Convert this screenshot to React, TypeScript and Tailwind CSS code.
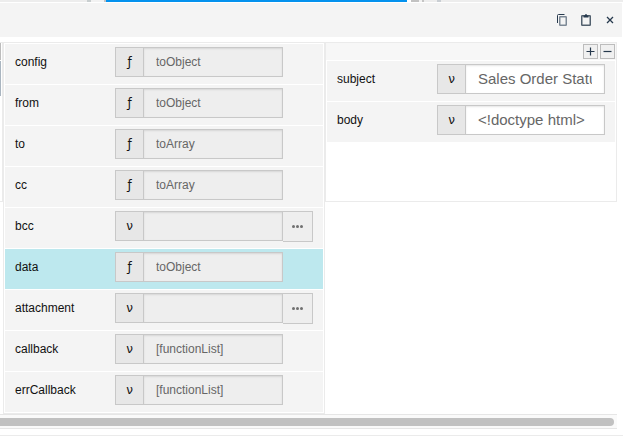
type FieldKind = "function" | "value";

interface Field {
  name: string;
  kind: FieldKind;
  value: string;
  hasMore?: boolean;
  selected?: boolean;
}

const properties: Field[] = [
  { name: "config", kind: "function", value: "toObject" },
  { name: "from", kind: "function", value: "toObject" },
  { name: "to", kind: "function", value: "toArray" },
  { name: "cc", kind: "function", value: "toArray" },
  { name: "bcc", kind: "value", value: "", hasMore: true },
  { name: "data", kind: "function", value: "toObject", selected: true },
  { name: "attachment", kind: "value", value: "", hasMore: true },
  { name: "callback", kind: "value", value: "[functionList]" },
  { name: "errCallback", kind: "value", value: "[functionList]" },
];

const details: Field[] = [
  { name: "subject", kind: "value", value: "Sales Order Status" },
  { name: "body", kind: "value", value: "<!doctype html>" },
];

function FieldRow({ field, editable = false }: { field: Field; editable?: boolean }) {
  return (
    <div className={`flex h-10 items-start pt-[3px] pl-[10px] ${field.selected ? "bg-[#bde8ee]" : "bg-[#f4f4f4]"}`}>
      <label htmlFor={field.name} className="w-[100px] shrink-0 text-[12px] leading-[30px] text-[#111]">
        {field.name}
      </label>
      <div className="flex h-[30px] w-[168px] shrink-0 border border-[#c8c8c8]">
        <button
          type="button"
          aria-label={`${field.name} type`}
          className="w-[28px] shrink-0 border-r border-[#c8c8c8] bg-[#e7e7e7] font-['DejaVu_Sans',sans-serif] text-[12px] text-[#111]"
        >
          {field.kind === "function" ? "ƒ" : "ν"}
        </button>
        <input
          id={field.name}
          type="text"
          readOnly={!editable}
          defaultValue={field.value}
          className={`w-full min-w-0 px-3 text-[#666] shadow-[inset_0_1px_2px_#0000001a] outline-none ${
            editable ? "bg-white text-[15px]" : "bg-[#eeeeee] text-[12px]"
          }`}
        />
      </div>
      {field.hasMore && (
        <button
          type="button"
          aria-label={`More options for ${field.name}`}
          className="flex h-[31px] w-[30px] items-center justify-center gap-px border border-l-0 border-[#c8c8c8] bg-[#eeeeee]"
        >
          <span className="size-[3px] rounded-full bg-[#707070]" />
          <span className="size-[3px] rounded-full bg-[#707070]" />
          <span className="size-[3px] rounded-full bg-[#707070]" />
        </button>
      )}
    </div>
  );
}

function TabStrip() {
  return (
    <div className="flex h-[2px] bg-[#ededed]">
      <div className="ml-[87px] w-1 bg-[#c8cecf]" />
      <div className="w-[13px] bg-[#f2f2f2]" />
      <div className="w-[2px] bg-[#c4c4c4]" />
      <div className="w-[301px] bg-[#0492ee]" />
      <div className="w-1 bg-white" />
      <div className="w-2 bg-[#c2c2c2]" />
      <div className="w-[3px] bg-[#f2f2f2]" />
      <div className="w-[2px] bg-[#c4c4c4]" />
      <div className="ml-[13px] w-1 bg-[#c9ced3]" />
    </div>
  );
}

function Header() {
  return (
    <header className="mt-px mr-px flex h-[34px] items-center justify-end gap-[14px] bg-[#f4f4f4] pr-2">
      <button type="button" aria-label="Copy">
        <svg width="10" height="12" viewBox="0 0 10 12" fill="none">
          <path d="M0.5 9V1.5Q0.5 0.5 1.5 0.5H7.5" stroke="#26394d" />
          <rect x="2.75" y="2.75" width="6.5" height="8.5" rx="0.5" stroke="#7d8996" strokeWidth="1.5" />
        </svg>
      </button>
      <button type="button" aria-label="Paste">
        <svg width="10" height="12" viewBox="0 0 10 12" fill="none">
          <rect x="0.75" y="1.75" width="8.5" height="9.5" rx="0.5" stroke="#52606e" strokeWidth="1.5" />
          <path d="M2.5 1.5H3.8Q4 0 5 0T6.2 1.5H7.5V3.5H2.5Z" fill="#26394d" />
        </svg>
      </button>
      <button type="button" aria-label="Close" className="ml-px">
        <svg width="8" height="8" viewBox="0 0 8 8" fill="none" stroke="#26394d" strokeWidth="1.3">
          <path d="M1 1L7 7M7 1L1 7" />
        </svg>
      </button>
    </header>
  );
}

function SquareButton({ label, path }: { label: string; path: string }) {
  return (
    <button
      type="button"
      aria-label={label}
      className="flex size-[15px] items-center justify-center border border-[#bcbcbc] bg-[#f0f0f0]"
    >
      <svg width="9" height="9" viewBox="0 0 9 9" stroke="#26394d" strokeWidth="1.2">
        <path d={path} />
      </svg>
    </button>
  );
}

export default function App() {
  return (
    <div className="bg-white font-['Liberation_Sans',Arial,sans-serif]">
      <TabStrip />
      <Header />
      <main className="mt-[5px] mr-[6px] flex items-start">
        <div className="h-[160px] w-[3px] shrink-0 border-t border-r border-b border-[#ebebeb]">
          <div className="h-[17px] w-px bg-[#bcbcbc]" />
          <div className="mt-px h-[35px] w-px bg-[#a9b5c0]" />
        </div>
        <section className="flex w-[322px] shrink-0 flex-col gap-px border border-[#ebebeb] p-px">
          {properties.map((field) => (
            <FieldRow key={field.name} field={field} />
          ))}
        </section>
        <section className="h-[160px] min-w-0 flex-1 border border-[#ebebeb]">
          <div className="flex h-[17px] items-start justify-end gap-[2px] bg-[#f7f7f7] pt-px pr-px">
            <SquareButton label="Add" path="M0.5 4.5H8.5M4.5 0.5V8.5" />
            <SquareButton label="Remove" path="M0.5 4.5H8.5" />
          </div>
          <div className="flex flex-col gap-px px-px pt-px">
            {details.map((field) => (
              <FieldRow key={field.name} field={field} editable />
            ))}
          </div>
        </section>
      </main>
      <div className="mr-[6px] border-y border-[#e6e6e6] bg-[#fafafa] pt-[3px] pr-[3px] pb-[2px]">
        <div className="h-2 rounded-r-full bg-[#c1c1c1]" />
      </div>
      <footer className="mt-[6px] border-t border-[#ebebeb]" />
    </div>
  );
}
